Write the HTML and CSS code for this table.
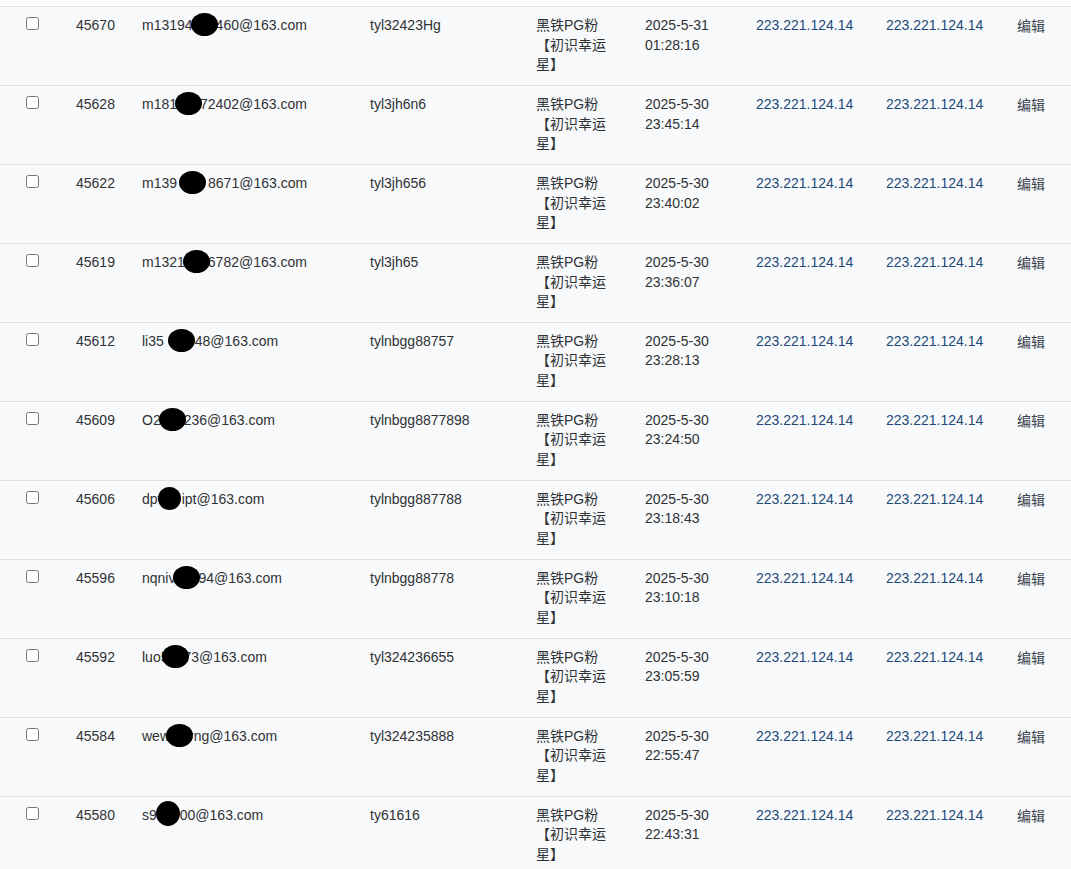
FILE: index.html
```html
<!DOCTYPE html>
<html lang="zh-CN">
<head>
<meta charset="utf-8">
<title>用户列表</title>
<link rel="stylesheet" href="styles.css">
</head>
<body>
<div class="top-gap"></div>
<table class="grid">
  <colgroup>
    <col class="c-check"><col class="c-id"><col class="c-email"><col class="c-user"><col class="c-level"><col class="c-date"><col class="c-ip"><col class="c-ip2"><col class="c-act">
  </colgroup>
  <tbody>
    <tr>
      <td class="check"><input type="checkbox"></td>
      <td>45670</td>
      <td>m13194<span class="redact w23"></span>460@163.com</td>
      <td>tyl32423Hg</td>
      <td><div class="level">黑铁PG粉【初识幸运星】</div></td>
      <td>2025-5-31 01:28:16</td>
      <td class="ip">223.221.124.14</td>
      <td class="ip">223.221.124.14</td>
      <td class="act">编辑</td>
    </tr>
    <tr>
      <td class="check"><input type="checkbox"></td>
      <td>45628</td>
      <td>m181<span class="redact w23"></span>72402@163.com</td>
      <td>tyl3jh6n6</td>
      <td><div class="level">黑铁PG粉【初识幸运星】</div></td>
      <td>2025-5-30 23:45:14</td>
      <td class="ip">223.221.124.14</td>
      <td class="ip">223.221.124.14</td>
      <td class="act">编辑</td>
    </tr>
    <tr>
      <td class="check"><input type="checkbox"></td>
      <td>45622</td>
      <td>m139<span class="redact w31"></span>8671@163.com</td>
      <td>tyl3jh656</td>
      <td><div class="level">黑铁PG粉【初识幸运星】</div></td>
      <td>2025-5-30 23:40:02</td>
      <td class="ip">223.221.124.14</td>
      <td class="ip">223.221.124.14</td>
      <td class="act">编辑</td>
    </tr>
    <tr>
      <td class="check"><input type="checkbox"></td>
      <td>45619</td>
      <td>m1321<span class="redact w23"></span>6782@163.com</td>
      <td>tyl3jh65</td>
      <td><div class="level">黑铁PG粉【初识幸运星】</div></td>
      <td>2025-5-30 23:36:07</td>
      <td class="ip">223.221.124.14</td>
      <td class="ip">223.221.124.14</td>
      <td class="act">编辑</td>
    </tr>
    <tr>
      <td class="check"><input type="checkbox"></td>
      <td>45612</td>
      <td>li35<span class="redact w31 right"></span>48@163.com</td>
      <td>tylnbgg88757</td>
      <td><div class="level">黑铁PG粉【初识幸运星】</div></td>
      <td>2025-5-30 23:28:13</td>
      <td class="ip">223.221.124.14</td>
      <td class="ip">223.221.124.14</td>
      <td class="act">编辑</td>
    </tr>
    <tr>
      <td class="check"><input type="checkbox"></td>
      <td>45609</td>
      <td>O2<span class="redact w23"></span>236@163.com</td>
      <td>tylnbgg8877898</td>
      <td><div class="level">黑铁PG粉【初识幸运星】</div></td>
      <td>2025-5-30 23:24:50</td>
      <td class="ip">223.221.124.14</td>
      <td class="ip">223.221.124.14</td>
      <td class="act">编辑</td>
    </tr>
    <tr>
      <td class="check"><input type="checkbox"></td>
      <td>45606</td>
      <td>dpw<span class="redact w14 left"></span>ipt@163.com</td>
      <td>tylnbgg887788</td>
      <td><div class="level">黑铁PG粉【初识幸运星】</div></td>
      <td>2025-5-30 23:18:43</td>
      <td class="ip">223.221.124.14</td>
      <td class="ip">223.221.124.14</td>
      <td class="act">编辑</td>
    </tr>
    <tr>
      <td class="check"><input type="checkbox"></td>
      <td>45596</td>
      <td>nqniv<span class="redact w23"></span>94@163.com</td>
      <td>tylnbgg88778</td>
      <td><div class="level">黑铁PG粉【初识幸运星】</div></td>
      <td>2025-5-30 23:10:18</td>
      <td class="ip">223.221.124.14</td>
      <td class="ip">223.221.124.14</td>
      <td class="act">编辑</td>
    </tr>
    <tr>
      <td class="check"><input type="checkbox"></td>
      <td>45592</td>
      <td>luo5<span class="redact w15"></span>73@163.com</td>
      <td>tyl324236655</td>
      <td><div class="level">黑铁PG粉【初识幸运星】</div></td>
      <td>2025-5-30 23:05:59</td>
      <td class="ip">223.221.124.14</td>
      <td class="ip">223.221.124.14</td>
      <td class="act">编辑</td>
    </tr>
    <tr>
      <td class="check"><input type="checkbox"></td>
      <td>45584</td>
      <td>wew<span class="redact w19"></span>rng@163.com</td>
      <td>tyl324235888</td>
      <td><div class="level">黑铁PG粉【初识幸运星】</div></td>
      <td>2025-5-30 22:55:47</td>
      <td class="ip">223.221.124.14</td>
      <td class="ip">223.221.124.14</td>
      <td class="act">编辑</td>
    </tr>
    <tr>
      <td class="check"><input type="checkbox"></td>
      <td>45580</td>
      <td>s9<span class="redact w23 high"></span>00@163.com</td>
      <td>ty61616</td>
      <td><div class="level">黑铁PG粉【初识幸运星】</div></td>
      <td>2025-5-30 22:43:31</td>
      <td class="ip">223.221.124.14</td>
      <td class="ip">223.221.124.14</td>
      <td class="act">编辑</td>
    </tr>
  </tbody>
</table>
</body>
</html>
```

FILE: styles.css
```css
html, body {
  margin: 0;
  padding: 0;
  background: #fcfcfd;
}

body {
  font-family: "Liberation Sans", Arial, "Noto Sans CJK SC", sans-serif;
  font-size: 14px;
  line-height: 19.6px;
  color: #2f3236;
  overflow: hidden;
}

.top-gap {
  height: 6px;
}

.grid {
  width: 1071px;
  table-layout: fixed;
  border-collapse: collapse;
  background: #f8f9fa;
}

.c-check { width: 64px; }
.c-id { width: 66px; }
.c-email { width: 228px; }
.c-user { width: 166px; }
.c-level { width: 109px; }
.c-date { width: 111px; }
.c-ip { width: 130px; }
.c-ip2 { width: 131px; }
.c-act { width: 66px; }

.grid tr {
  border-top: 1px solid #dee2e6;
}

.grid td {
  padding: 9px 12px 10.2px 12px;
  vertical-align: top;
  white-space: normal;
}

.grid td.check {
  padding-left: 26px;
}

.check input {
  display: block;
  margin: 1px 0 0 0;
  width: 13px;
  height: 13px;
}

.level {
  width: 73px;
}

.ip {
  color: #1d4a78;
}

.grid td.act {
  color: #3b4350;
  padding-top: 10px;
}

.redact {
  display: inline-block;
  position: relative;
  height: 0;
}

.redact::after {
  content: "";
  position: absolute;
  left: 50%;
  margin-left: -13.5px;
  top: -17px;
  width: 27px;
  height: 23px;
  background: #000000;
  border-radius: 50%;
}

.redact.left::after {
  margin-left: -17px;
  width: 23px;
}

.redact.right::after {
  margin-left: -11px;
}

.redact.high::after {
  top: -19px;
  width: 24px;
  margin-left: -12px;
  height: 25px;
}

.w14 { width: 14px; }
.w15 { width: 15px; }
.w19 { width: 19px; }
.w23 { width: 23px; }
.w31 { width: 31px; }
```
